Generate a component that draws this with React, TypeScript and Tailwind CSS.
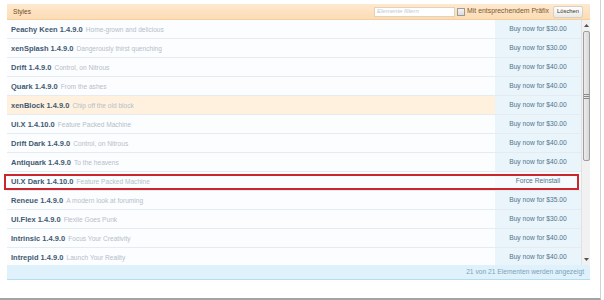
import React from 'react';

type Style = {
  name: string;
  tagline: string;
  action: string;
  highlight?: boolean;
  marked?: boolean;
};

const styles: Style[] = [
  { name: 'Peachy Keen 1.4.9.0', tagline: 'Home-grown and delicious', action: 'Buy now for $30.00' },
  { name: 'xenSplash 1.4.9.0', tagline: 'Dangerously thirst quenching', action: 'Buy now for $30.00' },
  { name: 'Drift 1.4.9.0', tagline: 'Control, on Nitrous', action: 'Buy now for $40.00' },
  { name: 'Quark 1.4.9.0', tagline: 'From the ashes', action: 'Buy now for $40.00' },
  { name: 'xenBlock 1.4.9.0', tagline: 'Chip off the old block', action: 'Buy now for $40.00', highlight: true },
  { name: 'UI.X 1.4.10.0', tagline: 'Feature Packed Machine', action: 'Buy now for $30.00' },
  { name: 'Drift Dark 1.4.9.0', tagline: 'Control, on Nitrous', action: 'Buy now for $40.00' },
  { name: 'Antiquark 1.4.9.0', tagline: 'To the heavens', action: 'Buy now for $40.00' },
  { name: 'UI.X Dark 1.4.10.0', tagline: 'Feature Packed Machine', action: 'Force Reinstall', marked: true },
  { name: 'Reneue 1.4.9.0', tagline: 'A modern look at foruming', action: 'Buy now for $35.00' },
  { name: 'UI.Flex 1.4.9.0', tagline: 'Flexile Goes Punk', action: 'Buy now for $30.00' },
  { name: 'Intrinsic 1.4.9.0', tagline: 'Focus Your Creativity', action: 'Buy now for $40.00' },
  { name: 'Intrepid 1.4.9.0', tagline: 'Launch Your Reality', action: 'Buy now for $40.00' },
];

const Row: React.FC<{ item: Style }> = ({ item }) => (
  <div
    className={`relative flex h-[19px] shrink-0 border-b border-[#e4ecf1] ${
      item.highlight ? 'bg-[#fff1de]' : 'bg-[#fcfdfe]'
    }`}
  >
    <div className="flex flex-1 items-center gap-[3px] pl-[4px] pt-[1px] whitespace-nowrap">
      <span className="text-[7.5px] font-bold text-[#3f5a72]">{item.name}</span>
      <span className="text-[6.6px] text-[#b4c0ca]">{item.tagline}</span>
    </div>
    <div
      className={`flex w-[86px] items-center justify-center text-[6.7px] text-[#52748c] ${
        item.marked ? 'bg-[#f7fbfe]' : 'bg-[#e9f4fb]'
      }`}
    >
      {item.action}
    </div>
    {item.marked && (
      <div className="pointer-events-none absolute top-[2px] bottom-[0px] left-[-3px] right-[2px] border-2 border-[#c9262d]" />
    )}
  </div>
);

const Scrollbar: React.FC = () => (
  <div className="flex w-[9px] flex-col items-center bg-[#f1f1f1] border-l border-[#e2e2e2]">
    <div className="flex h-[11px] w-full items-center justify-center">
      <svg width="5" height="3" viewBox="0 0 5 3">
        <path d="M0 3 L2.5 0 L5 3 Z" fill="#505050" />
      </svg>
    </div>
    <div className="flex h-[130px] w-[7px] items-center justify-center rounded-[2px] border border-[#9e9e9e] bg-gradient-to-r from-[#ececec] to-[#d9d9d9]">
      <svg width="5" height="5" viewBox="0 0 5 5">
        <path d="M0 0.5 H5 M0 2.5 H5 M0 4.5 H5" stroke="#8a8a8a" strokeWidth="1" />
      </svg>
    </div>
    <div className="flex-1" />
    <div className="flex h-[11px] w-full items-center justify-center">
      <svg width="5" height="3" viewBox="0 0 5 3">
        <path d="M0 0 L2.5 3 L5 0 Z" fill="#505050" />
      </svg>
    </div>
  </div>
);

const App: React.FC = () => {
  return (
    <div className="h-[300px] w-[604px] overflow-hidden bg-white font-['Liberation_Sans',Arial,sans-serif]">
      <div className="h-[300px] w-[601px] border-r border-b-2 border-r-[#d2d2d2] border-b-[#a4a4a4] pt-[4px] pl-[7px]">
        <div className="w-[583px]">
          <div className="flex h-[16px] items-center justify-between border-b border-[#f3cf9f] bg-gradient-to-b from-[#fee9cf] to-[#fcdcb4] pl-[6px] pr-[7px]">
            <span className="text-[6.6px] text-[#6d4b26]">Styles</span>
            <div className="flex items-center">
              <div className="flex h-[10px] w-[81px] items-center border border-[#e4d2b8] bg-white px-[2px] text-[6px] italic text-[#c4c9ce]">
                Elemente filtern
              </div>
              <div className="ml-[2px] h-[8px] w-[8px] border border-[#9a9a9a] bg-gradient-to-b from-[#f4f4f4] to-[#dcdcdc]" />
              <span className="ml-[2px] text-[6.9px] text-[#7a5a32]">Mit entsprechendem Präfix</span>
              <button className="ml-[4px] flex h-[12px] w-[30px] items-center justify-center rounded-[2px] border border-[#d6d0c6] bg-gradient-to-b from-[#ffffff] to-[#ece9e4] text-[5.8px] text-[#333333]">
                Löschen
              </button>
            </div>
          </div>
          <div className="ml-[-3px] flex h-[245px] overflow-hidden pl-[3px]">
            <div className="flex w-[574px] flex-col">
              {styles.map((s) => (
                <Row key={s.name} item={s} />
              ))}
            </div>
            <Scrollbar />
          </div>
          <div className="flex h-[15px] items-center justify-end border-b border-[#b6dcef] bg-[#dff1fb] pr-[6px] text-[6.7px] text-[#7ca2ba]">
            21 von 21 Elementen werden angezeigt
          </div>
        </div>
      </div>
    </div>
  );
};

export default App;
